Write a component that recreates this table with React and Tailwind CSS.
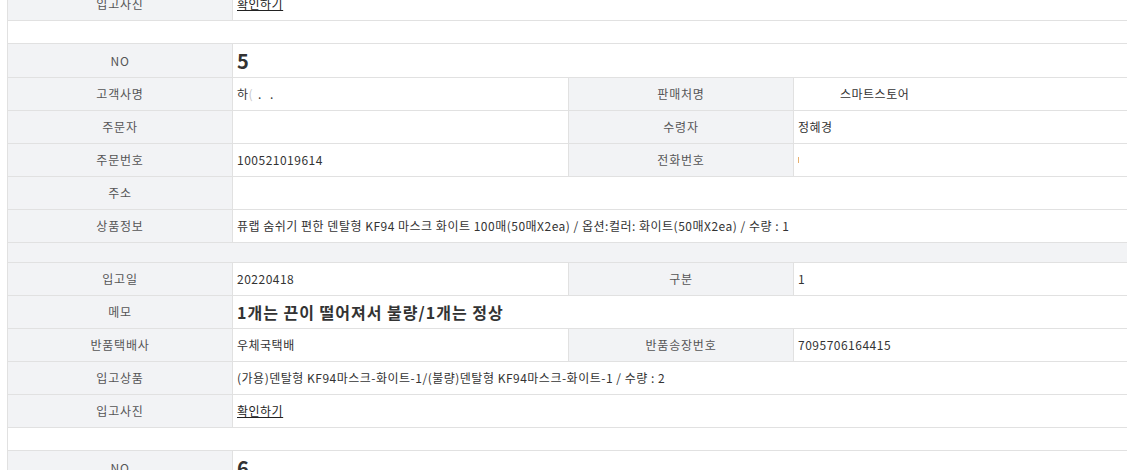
import React from "react";

const FONT = { fontFamily: '"Noto Sans CJK KR", "Noto Sans", sans-serif' };

function Label({ children }) {
  return (
    <div className="w-[225px] shrink-0 h-full bg-[#f2f3f5] border-r border-[#e1e1e1] flex items-center justify-center text-[12px] tracking-[0.8px] text-[#555]">
      {children}
    </div>
  );
}

function Value({ children, className = "", wide = false }) {
  return (
    <div
      className={
        (wide ? "flex-1 " : "w-[336px] shrink-0 border-r border-[#e1e1e1] ") +
        "h-full flex items-center pl-[4px] text-[12px] tracking-[0.5px] text-[#333] whitespace-pre " +
        className
      }
    >
      {children}
    </div>
  );
}

function Row({ children, h = "h-[33px]" }) {
  return <div className={`flex ${h} border-b border-[#e1e1e1]`}>{children}</div>;
}

function Blank() {
  return <div className="h-[23px] border-b border-[#e1e1e1] bg-white" />;
}

function Link() {
  return <span className="underline text-[#222] cursor-pointer">확인하기</span>;
}

export default function App() {
  return (
    <div className="w-[1127px] h-[470px] overflow-hidden bg-white" style={FONT}>
      <div className="mt-[-12px] ml-[7px] w-[1160px] border-l border-[#e1e1e1]">
        <Row>
          <Label>입고사진</Label>
          <Value wide>
            <Link />
          </Value>
        </Row>
        <Blank />

        <Row h="h-[34px]">
          <Label>NO</Label>
          <Value wide className="text-[20px] font-bold text-[#111] tracking-normal">
            5
          </Value>
        </Row>
        <Row>
          <Label>고객사명</Label>
          <Value>
            하<span className="text-[#c8c8c8]">(</span>
            <span className="ml-[5px]">.</span>
            <span className="ml-[8px]">.</span>
          </Value>
          <Label>판매처명</Label>
          <Value wide className="pl-[46px]">
            스마트스토어
          </Value>
        </Row>
        <Row>
          <Label>주문자</Label>
          <Value></Value>
          <Label>수령자</Label>
          <Value wide>정혜경</Value>
        </Row>
        <Row>
          <Label>주문번호</Label>
          <Value>100521019614</Value>
          <Label>전화번호</Label>
          <Value wide>
            <span className="inline-block w-[1px] h-[6px] bg-[#e6b070]" />
          </Value>
        </Row>
        <Row>
          <Label>주소</Label>
          <Value wide></Value>
        </Row>
        <Row>
          <Label>상품정보</Label>
          <Value wide>
            퓨랩 숨쉬기 편한 덴탈형 KF94 마스크 화이트 100매(50매X2ea) / 옵션:컬러: 화이트(50매X2ea) / 수량 : 1
          </Value>
        </Row>
        <div className="h-[20px] border-b border-[#e1e1e1] bg-[#f2f3f5]" />

        <Row>
          <Label>입고일</Label>
          <Value>20220418</Value>
          <Label>구분</Label>
          <Value wide>1</Value>
        </Row>
        <Row>
          <Label>메모</Label>
          <Value wide className="text-[16px] font-bold text-[#222] tracking-[1px]">
            1개는 끈이 떨어져서 불량/1개는 정상
          </Value>
        </Row>
        <Row>
          <Label>반품택배사</Label>
          <Value>우체국택배</Value>
          <Label>반품송장번호</Label>
          <Value wide>7095706164415</Value>
        </Row>
        <Row>
          <Label>입고상품</Label>
          <Value wide>
            (가용)덴탈형 KF94마스크-화이트-1/(불량)덴탈형 KF94마스크-화이트-1 / 수량 : 2
          </Value>
        </Row>
        <Row>
          <Label>입고사진</Label>
          <Value wide>
            <Link />
          </Value>
        </Row>
        <Blank />

        <Row h="h-[34px]">
          <Label>NO</Label>
          <Value wide className="text-[20px] font-bold text-[#111] tracking-normal">
            6
          </Value>
        </Row>
      </div>
    </div>
  );
}
